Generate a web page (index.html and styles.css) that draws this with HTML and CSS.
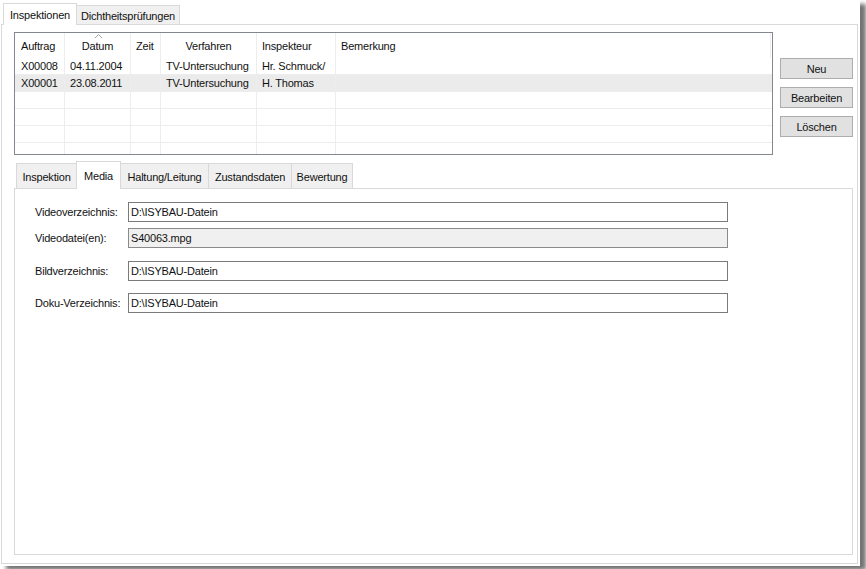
FILE: index.html
```html
<!DOCTYPE html>
<html lang="de">
<head>
<meta charset="utf-8">
<title>Inspektionen</title>
<link rel="stylesheet" href="styles.css">
</head>
<body>
<div class="window">
  <div class="tabstrip top-tabs">
    <div class="tab active tab-insp">Inspektionen</div>
    <div class="tab tab-dicht">Dichtheitsprüfungen</div>
  </div>
  <div class="page outer-page">
    <div class="top-row">
      <div class="listview">
        <div class="lv-row lv-header">
          <div class="cell c1">Auftrag</div>
          <div class="cell c2 center sorted">Datum
            <svg class="sort-arrow" width="9" height="6" viewBox="0 0 9 6"><polyline points="1,5 4.5,1.5 8,5" fill="none" stroke="#a2a2a2" stroke-width="1"/></svg>
          </div>
          <div class="cell c3">Zeit</div>
          <div class="cell c4 center">Verfahren</div>
          <div class="cell c5">Inspekteur</div>
          <div class="cell c6">Bemerkung</div>
        </div>
        <div class="lv-row">
          <div class="cell c1">X00008</div>
          <div class="cell c2">04.11.2004</div>
          <div class="cell c3"></div>
          <div class="cell c4">TV-Untersuchung</div>
          <div class="cell c5">Hr. Schmuck/</div>
          <div class="cell c6"></div>
        </div>
        <div class="lv-row selected">
          <div class="cell c1">X00001</div>
          <div class="cell c2">23.08.2011</div>
          <div class="cell c3"></div>
          <div class="cell c4">TV-Untersuchung</div>
          <div class="cell c5">H. Thomas</div>
          <div class="cell c6"></div>
        </div>
        <div class="lv-row"><div class="cell c1"></div><div class="cell c2"></div><div class="cell c3"></div><div class="cell c4"></div><div class="cell c5"></div><div class="cell c6"></div></div>
        <div class="lv-row"><div class="cell c1"></div><div class="cell c2"></div><div class="cell c3"></div><div class="cell c4"></div><div class="cell c5"></div><div class="cell c6"></div></div>
        <div class="lv-row"><div class="cell c1"></div><div class="cell c2"></div><div class="cell c3"></div><div class="cell c4"></div><div class="cell c5"></div><div class="cell c6"></div></div>
        <div class="lv-row"><div class="cell c1"></div><div class="cell c2"></div><div class="cell c3"></div><div class="cell c4"></div><div class="cell c5"></div><div class="cell c6"></div></div>
      </div>
      <div class="buttons">
        <div class="btn">Neu</div>
        <div class="btn">Bearbeiten</div>
        <div class="btn">Löschen</div>
      </div>
    </div>
    <div class="inner-tabs">
      <div class="tabstrip sub-tabs">
        <div class="tab t-insp">Inspektion</div>
        <div class="tab active t-media">Media</div>
        <div class="tab t-halt">Haltung/Leitung</div>
        <div class="tab t-zust">Zustandsdaten</div>
        <div class="tab t-bew">Bewertung</div>
      </div>
      <div class="page inner-page">
        <div class="form">
          <div class="field">
            <div class="label">Videoverzeichnis:</div>
            <div class="input">D:\ISYBAU-Datein</div>
          </div>
          <div class="field f2">
            <div class="label">Videodatei(en):</div>
            <div class="input disabled">S40063.mpg</div>
          </div>
          <div class="field f3">
            <div class="label">Bildverzeichnis:</div>
            <div class="input">D:\ISYBAU-Datein</div>
          </div>
          <div class="field f4">
            <div class="label">Doku-Verzeichnis:</div>
            <div class="input">D:\ISYBAU-Datein</div>
          </div>
        </div>
      </div>
    </div>
  </div>
</div>
</body>
</html>
```

FILE: styles.css
```css
* { box-sizing: border-box; }

html, body {
  margin: 0;
  padding: 0;
  background: #ffffff;
}

body {
  font-family: "Liberation Sans", Arial, sans-serif;
  font-size: 11px;
  letter-spacing: -0.2px;
  color: #111111;
  width: 866px;
  height: 569px;
  overflow: hidden;
}

.window {
  width: 860px;
  height: 566px;
  background: #ffffff;
  box-shadow: 6px 4px 4px rgba(0, 0, 0, 0.55);
  display: flex;
  flex-direction: column;
  padding-bottom: 2px;
}

/* ---------- tabs ---------- */
.tabstrip {
  display: flex;
  align-items: flex-end;
  border-bottom: 1px solid #d9d9d9;
}

.tab {
  display: flex;
  align-items: center;
  justify-content: center;
  border: 1px solid #d9d9d9;
  border-bottom: none;
  background: #f0f0f0;
  white-space: nowrap;
  padding-top: 2px;
}

.tab + .tab { margin-left: -1px; }

.tab.active {
  background: #ffffff;
  margin-bottom: -1px;
  padding-top: 0;
}

.top-tabs {
  margin-left: 1px;
  width: 857px;
  height: 25px;
  padding-left: 2px;
}

.top-tabs .tab { height: 19px; }
.top-tabs .tab.active { height: 22px; }
.tab-insp { width: 74px; }
.tab-dicht { width: 104px; }

.sub-tabs {
  height: 28px;
  padding-left: 2px;
}

.sub-tabs .tab { height: 25px; }
.sub-tabs .tab.active { height: 28px; }
.t-insp { width: 61px; }
.t-media { width: 45px; }
.t-halt { width: 89px; }
.t-zust { width: 84px; }
.t-bew { width: 62px; }

.page {
  border: 1px solid #d9d9d9;
  border-top: none;
  background: #ffffff;
}

.outer-page {
  margin-left: 1px;
  width: 857px;
  flex: 1;
  display: flex;
  flex-direction: column;
  padding: 7px 4px 8px 12px;
}

/* ---------- list + buttons ---------- */
.top-row {
  display: flex;
  gap: 7px;
}

.listview {
  width: 759px;
  height: 123px;
  border: 1px solid #828790;
  overflow: hidden;
  background: #ffffff;
}

.lv-row {
  display: grid;
  grid-template-columns: 50px 66px 30px 96px 79px 435px;
  height: 17px;
  border-bottom: 1px solid #ededed;
}

.lv-row.selected { background: #ebebeb; }

.lv-header {
  height: 25px;
  border-bottom: none;
}

.cell {
  display: flex;
  align-items: center;
  padding-left: 5px;
  border-right: 1px solid #ededed;
  white-space: nowrap;
  overflow: hidden;
}

.lv-row .c6 { border-right: none; }
.lv-header .c6 { border-right: 1px solid #ededed; }
.cell.c1 { padding-left: 6px; }

.cell.center {
  justify-content: center;
  padding-left: 0;
}

.sorted { position: relative; }

.sort-arrow {
  position: absolute;
  left: 29px;
  top: 0;
}

.buttons {
  width: 73px;
  display: flex;
  flex-direction: column;
  gap: 8px;
  padding-top: 26px;
}

.btn {
  height: 21px;
  background: #e1e1e1;
  border: 1px solid #adadad;
  display: flex;
  align-items: center;
  justify-content: center;
}

/* ---------- inner tab control ---------- */
.inner-tabs {
  margin-top: 6px;
  width: 839px;
  flex: 1;
  display: flex;
  flex-direction: column;
}

.inner-page {
  flex: 1;
  padding: 13px 0 0 20px;
}

.form {
  display: flex;
  flex-direction: column;
}

.field {
  display: grid;
  grid-template-columns: 93px 600px;
  height: 20px;
  align-items: center;
}

.field.f2 { margin-top: 6px; }
.field.f3 { margin-top: 13px; }
.field.f4 { margin-top: 12px; }

.input {
  height: 20px;
  border: 1px solid #7a7a7a;
  background: #ffffff;
  display: flex;
  align-items: center;
  padding-left: 2px;
  white-space: nowrap;
}

.input.disabled {
  background: #f0f0f0;
  border-color: #8a8a8a;
}
```
